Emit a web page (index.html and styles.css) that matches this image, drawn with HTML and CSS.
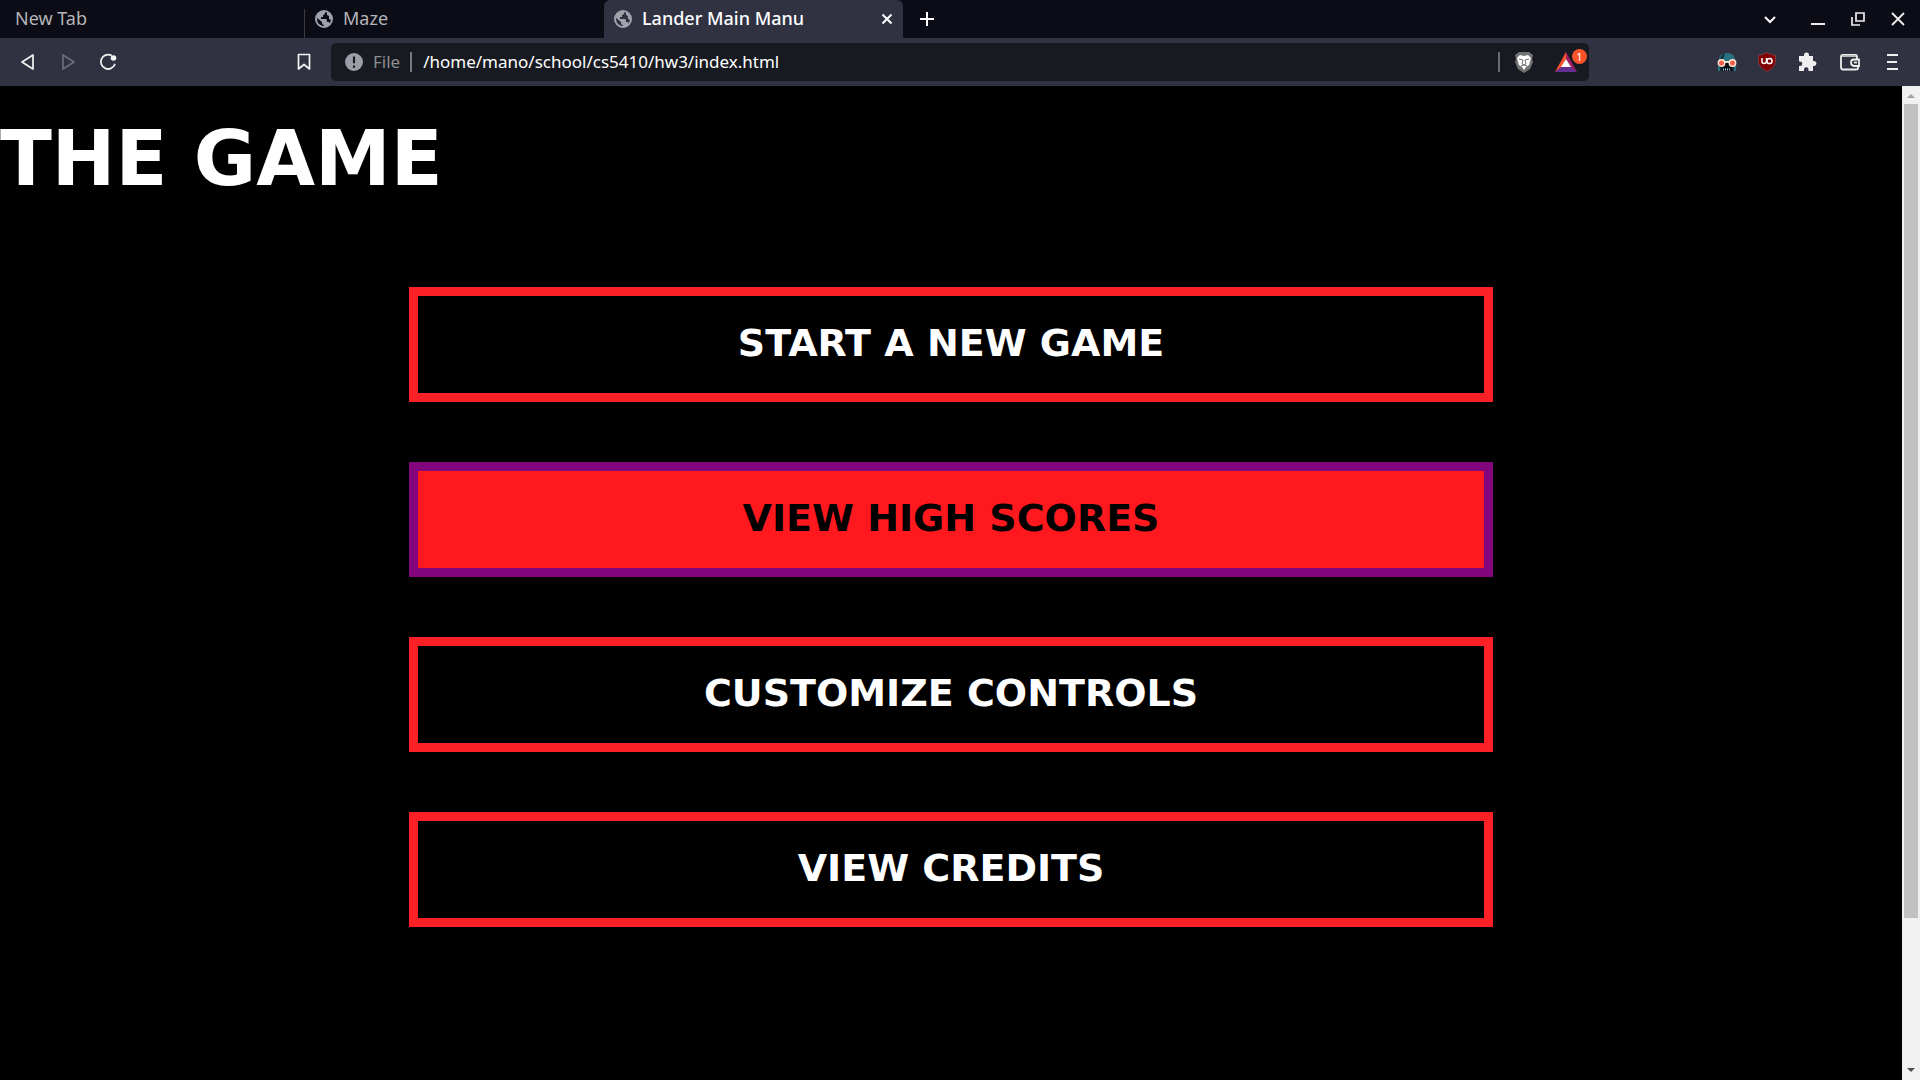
FILE: index.html
```html
<!DOCTYPE html>
<html lang="en">
<head>
<meta charset="utf-8">
<title>Lander Main Manu</title>
<link rel="stylesheet" href="styles.css">
</head>
<body>
<header class="browser">
  <div class="tabstrip">
    <button class="tab tab-first"><span class="tab-title">New Tab</span></button>
    <button class="tab">
      <svg class="globe" viewBox="0 0 18 18" width="18" height="18"><circle cx="9" cy="9" r="8" fill="none" stroke="currentColor" stroke-width="2"/><path fill="currentColor" d="M10 1V3Q10 5 8 5V7H6V9H11Q12 9 12 12H14L15 15 9 17V15Q7 15 7 12L1 7 4 3z"/><path fill="currentColor" d="M12 2L16 5 17 10 14 9 14 6 12 5z"/></svg>
      <span class="tab-title">Maze</span>
    </button>
    <button class="tab tab-active">
      <svg class="globe" viewBox="0 0 18 18" width="18" height="18"><circle cx="9" cy="9" r="8" fill="none" stroke="currentColor" stroke-width="2"/><path fill="currentColor" d="M10 1V3Q10 5 8 5V7H6V9H11Q12 9 12 12H14L15 15 9 17V15Q7 15 7 12L1 7 4 3z"/><path fill="currentColor" d="M12 2L16 5 17 10 14 9 14 6 12 5z"/></svg>
      <span class="tab-title">Lander Main Manu</span>
      <svg viewBox="0 0 12 12" width="12" height="12" fill="none" stroke="#fff" stroke-width="2"><path d="M1.500 1.500L10.500 10.500M10.500 1.500L1.500 10.500"/></svg>
    </button>
    <button class="icon-btn new-tab" aria-label="New tab"><svg viewBox="0 0 16 16" width="16" height="16" stroke="#fff" stroke-width="2"><path d="M8 1V15M1 8H15"/></svg></button>
    <div class="window-controls">
      <button class="icon-btn search-tabs" aria-label="Search tabs"><svg viewBox="0 0 14 14" width="14" height="14" fill="none" stroke="#fff" stroke-width="2"><path d="M2 5L7 10 12 5"/></svg></button>
      <button class="icon-btn" aria-label="Minimize"><svg viewBox="0 0 14 14" width="14" height="14" stroke="#eee" stroke-width="2"><path d="M0 12H14"/></svg></button>
      <button class="icon-btn" aria-label="Restore"><svg viewBox="0 0 14 14" width="14" height="14" fill="none" stroke="#eee" stroke-width="1.700"><path d="M5 1H13V9H5zM1 5V13H9"/></svg></button>
      <button class="icon-btn" aria-label="Close"><svg viewBox="0 0 14 14" width="14" height="14" stroke="#eee" stroke-width="1.800"><path d="M1 1L13 13M13 1L1 13"/></svg></button>
    </div>
  </div>
  <div class="toolbar">
    <nav class="nav">
      <button class="icon-btn" aria-label="Back"><svg viewBox="0 0 18 18" width="18" height="18" fill="none" stroke="#f2f2f2" stroke-width="1.700" stroke-linejoin="round"><path d="M14 2V16L3 9z"/></svg></button>
      <button class="icon-btn" aria-label="Forward"><svg viewBox="0 0 18 18" width="18" height="18" fill="none" stroke="#6b6d78" stroke-width="1.700" stroke-linejoin="round"><path d="M4 2V16L15 9z"/></svg></button>
      <button class="icon-btn" aria-label="Reload"><svg viewBox="0 0 18 18" width="18" height="18"><path fill="none" stroke="#f2f2f2" stroke-width="1.800" stroke-linecap="round" d="M12 2.200A7.200 7.200 0 1 0 15.800 11.500"/><circle cx="14.500" cy="5" r="2.800" fill="#f2f2f2"/></svg></button>
      <button class="icon-btn bookmark" aria-label="Bookmark"><svg viewBox="0 0 18 18" width="18" height="18" fill="none" stroke="#f2f2f2" stroke-width="1.700" stroke-linejoin="round"><path d="M3.500 1.500H14.500V16L9 11.500 3.500 16z"/></svg></button>
    </nav>
    <div class="address">
      <svg viewBox="0 0 20 20" width="18" height="18"><circle cx="10" cy="10" r="10" fill="#9b9ea7"/><path stroke="#17191f" stroke-width="2.400" d="M10 4V11.500M10 14V16.400"/></svg>
      <label class="scheme" for="url">File</label>
      <input class="url" id="url" type="text" value="/home/mano/school/cs5410/hw3/index.html">
      <span class="divider"></span>
      <button class="icon-btn shield" aria-label="Brave Shields"><svg viewBox="0 0 20 23" width="20" height="23"><path fill="#737373" d="M5 1H15L19 4 18 8 19 11 16 18 10 22 4 18 1 11 2 8 1 4z"/><path fill="#fff" d="M6 4L10 5 14 4 17 7 15 14 12 16 10 19 8 16 5 14 3 7z"/><path fill="none" stroke="#737373" stroke-width="1" d="M5 8L9 9 8 13 10 14 12 13 11 9 15 8M7 15L10 14 13 15"/></svg></button>
      <button class="icon-btn rewards" aria-label="Brave Rewards"><svg viewBox="0 0 22 20" width="22" height="20"><path fill="#ff5030" d="M11 0V7L6 16 0 20z"/><path fill="#9e1f63" d="M11 0L22 20 16 16 11 7z"/><path fill="#662d91" d="M0 20L6 15H16L22 20z"/><path fill="#fff" d="M11 7L16 15H6z"/></svg><span class="badge">1</span></button>
    </div>
    <div class="extensions">
      <button class="icon-btn" aria-label="Dark reader"><svg viewBox="0 0 20 20" width="20" height="20"><path fill="#28717f" d="M2 9Q2 1 10 1T18 9V10H2z"/><path fill="#142d39" d="M3 7Q5 2 8 1L6 7 3 9zM2 13H18V19H2z"/><path fill="#28717f" d="M1 14H3V19H1zM17 14H19V19H17z"/><path fill="#050b10" d="M5 11H15V19H5z"/><path stroke="#f8e8dc" stroke-width="1.800" d="M7 10H13"/><circle cx="4.500" cy="11" r="3.200" fill="#f45d48" stroke="#ffeadb" stroke-width="1.400"/><circle cx="15.500" cy="11" r="3.200" fill="#f45d48" stroke="#ffeadb" stroke-width="1.400"/><path stroke="#9cd5d9" stroke-width="2" stroke-dasharray="1 1" d="M6 17.500H14"/></svg></button>
      <button class="icon-btn" aria-label="uBlock Origin"><svg viewBox="0 0 20 20" width="20" height="20"><path fill="#800000" stroke="#9b4a50" stroke-width=".6" d="M10 .5Q14 3 18.500 3.500V9Q18.500 15 10 19.500 1.500 15 1.500 9V3.500Q6 3 10 .5z"/><path fill="none" stroke="#fff" stroke-width="1.500" d="M5 6V9.500Q5 11.500 7 11.500T9.500 9.500V6"/><circle cx="12.500" cy="9" r="2.600" fill="none" stroke="#fff" stroke-width="1.500"/></svg></button>
      <button class="icon-btn" aria-label="Extensions"><svg viewBox="0 0 20 20" width="20" height="20" fill="#eee"><path d="M2 4H7V3A2.400 2.400 0 0 1 12 3V4H16V9H17A2.400 2.400 0 0 1 17 14H16V19H11.500V17.500A2.200 2.200 0 0 0 7 17.500V19H2V14H3A2.200 2.200 0 0 0 3 9.500H2z"/></svg></button>
      <button class="icon-btn wallet" aria-label="Wallet"><svg viewBox="0 0 20 18" width="20" height="18" fill="none" stroke="#eee" stroke-width="1.800"><path d="M17 6V4Q17 2 15.500 2H3Q1 2 1 4V14Q1 16.500 3 16.500H16Q18 16.500 18 15V13M19 6.500H14Q11 6.500 11 9.500T14 13H19z"/><path stroke="#bbb" stroke-width="2" d="M2 3H16"/><path d="M14 9.500H17"/></svg></button>
      <button class="icon-btn" aria-label="Menu"><svg viewBox="0 0 12 18" width="12" height="18" stroke="#eee" stroke-width="2"><path d="M0 2H11M0 9H10M0 16H11"/></svg></button>
    </div>
  </div>
</header>
<div class="viewport">
  <main class="game">
    <h1 class="title">THE GAME</h1>
    <div class="menu">
      <button class="menu-item">START A NEW GAME</button>
      <button class="menu-item menu-item-hover">VIEW HIGH SCORES</button>
      <button class="menu-item">CUSTOMIZE CONTROLS</button>
      <button class="menu-item">VIEW CREDITS</button>
    </div>
  </main>
  <div class="scrollbar">
    <svg viewBox="0 0 18 18" width="18" height="18"><path fill="#a3a3a3" d="M5 12L9 8 13 12z"/></svg>
    <div class="track"><div class="thumb"></div></div>
    <svg viewBox="0 0 18 18" width="18" height="18"><path fill="#505050" d="M5 6H13L9 10z"/></svg>
  </div>
</div>
</body>
</html>
```

FILE: styles.css
```css
* { box-sizing: border-box; }

body {
  margin: 0;
  min-height: 100vh;
  display: flex;
  flex-direction: column;
  background: #000;
  color: #fff;
  font-family: "Noto Sans", sans-serif;
  font-size: 17px;
}

button, input {
  font: inherit;
  color: inherit;
  background: none;
  border: 0;
  padding: 0;
  margin: 0;
}

svg { display: block; flex: none; }

.tabstrip {
  display: flex;
  height: 38px;
  background: #0b0c15;
}

.tab {
  width: 299px;
  display: flex;
  align-items: center;
  gap: 10px;
  padding: 0 10px;
  color: #b4b5b8;
  font-size: 18px;
  text-align: left;
}

.tab-first {
  width: 305px;
  padding-left: 15px;
  border-right: 1px solid #3b3b3b;
  border-image: linear-gradient(transparent 24%, #3b3b3b 24%) 1;
}

.tab-active {
  background: #303242;
  border-radius: 6px 6px 0 0;
  color: #fff;
  font-weight: 500;
}

.globe { color: #a0a3ab; }

.tab-title {
  flex: 1;
  padding-bottom: 2px;
  white-space: nowrap;
}

.icon-btn {
  width: 40px;
  height: 38px;
  display: flex;
  align-items: center;
  justify-content: center;
}

.new-tab { width: 48px; }

.window-controls {
  display: flex;
  margin-left: auto;
  padding-right: 2px;
}

.search-tabs { width: 56px; }

.toolbar {
  display: flex;
  align-items: center;
  height: 48px;
  background: #303242;
}

.nav {
  display: flex;
  width: 331px;
  padding: 0 7px 0 8px;
}

.bookmark { margin-left: auto; }

.address {
  flex: 1;
  display: flex;
  align-items: center;
  height: 38px;
  padding: 0 2px 0 14px;
  background: #181a21;
  border-radius: 5px;
}

.scheme {
  margin-left: 10px;
  padding-right: 10px;
  line-height: 20px;
  color: #8c8e94;
  border-right: 2px solid #77797e;
}

.url {
  flex: 1;
  min-width: 0;
  padding: 0 0 2px 11px;
}

.divider {
  width: 2px;
  height: 20px;
  background: #696b70;
  margin-right: 4px;
}

.rewards { position: relative; width: 43px; }

.badge {
  position: absolute;
  top: 6px;
  right: 0;
  width: 15px;
  height: 15px;
  border-radius: 50%;
  background: #fb542b;
  font-size: 11px;
  line-height: 15px;
  text-align: center;
}

.extensions {
  display: flex;
  justify-content: flex-end;
  width: 331px;
  padding-right: 7px;
}

.wallet { width: 46px; }

.viewport { flex: 1; display: flex; }

.game {
  flex: 1;
  font-family: "DejaVu Sans", sans-serif;
  font-weight: 700;
}

.title {
  margin: 30px 0 85px;
  font-size: 76px;
  line-height: 86px;
}

.menu {
  display: flex;
  flex-direction: column;
  gap: 60px;
  width: 57%;
  margin: 0 auto;
}

.menu-item {
  height: 115px;
  padding-bottom: 3px;
  border: 9px solid #fa2025;
  font-size: 38px;
}

.menu-item-hover {
  border-color: #82057d;
  background: #ff191f;
  color: #000;
}

.scrollbar {
  width: 18px;
  display: flex;
  flex-direction: column;
  background: #f1f1f1;
}

.track { flex: 1; padding: 0 2px; }

.thumb { height: 85%; background: #c1c1c1; }
```
